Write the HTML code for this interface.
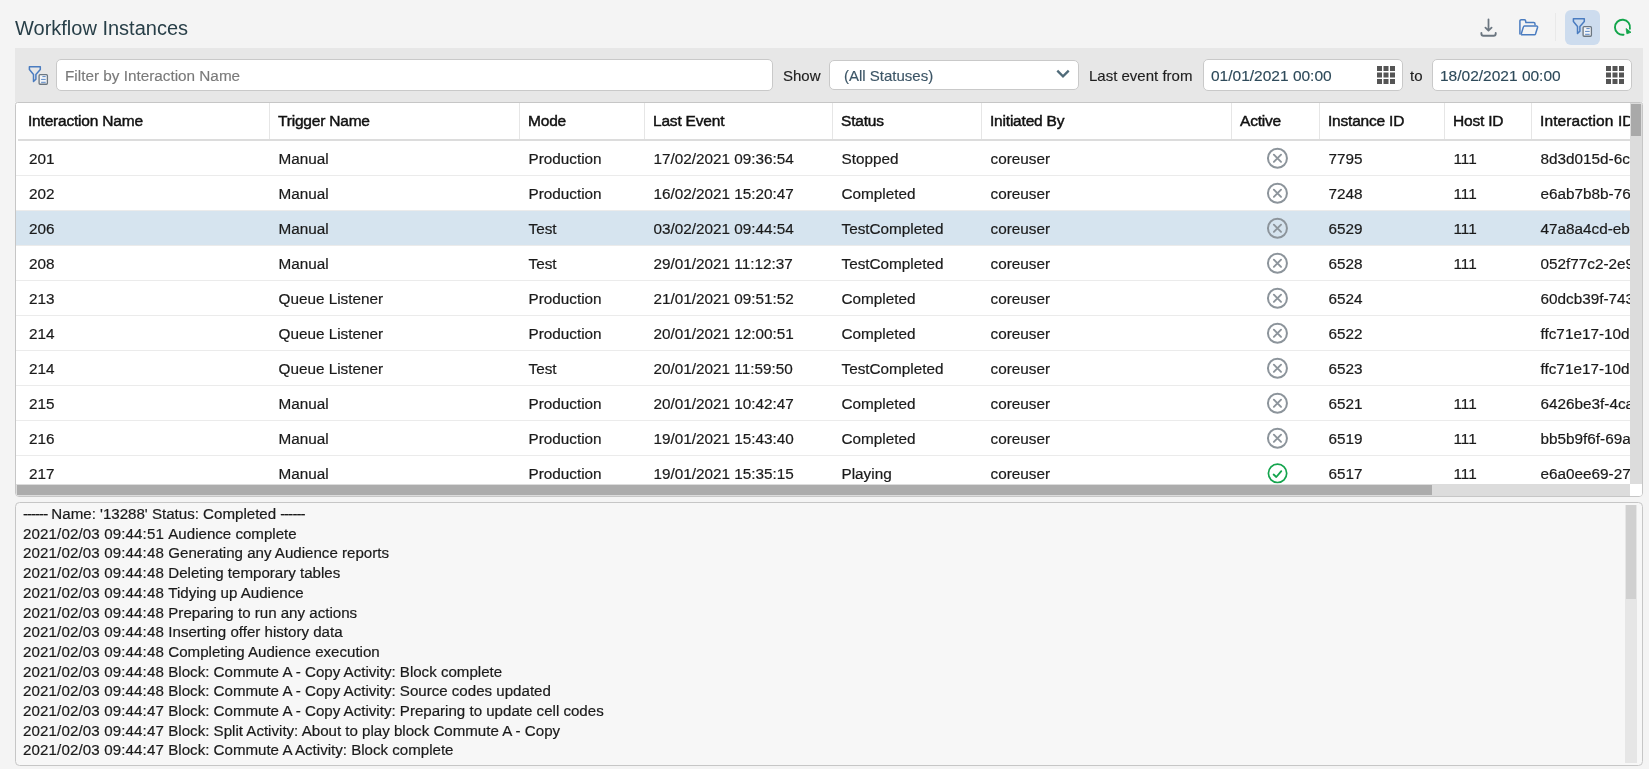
<!DOCTYPE html>
<html><head><meta charset="utf-8">
<style>
*{box-sizing:border-box;margin:0;padding:0}
html,body{-webkit-font-smoothing:antialiased;width:1649px;height:769px;overflow:hidden;background:#f4f4f4;font-family:"Liberation Sans",sans-serif;color:#222;font-size:15px}
.abs{position:absolute}
#title{position:absolute;left:15px;top:15.5px;font-size:20px;color:#283f48;letter-spacing:0px;line-height:24px;white-space:nowrap}
#toolbar{position:absolute;left:15px;top:48px;width:1628px;height:54px;background:#e7e7e7}
.inp{position:absolute;background:#fff;border:1px solid #c9c9c9;border-radius:5px}
.lbl{position:absolute;top:66px;line-height:20px;color:#1e1e1e;white-space:nowrap;-webkit-text-stroke:0.15px currentColor}
#table{position:absolute;left:15px;top:102px;width:1628px;height:395px;background:#fff;border:1px solid #c6c6c6;border-radius:2.5px 2.5px 4px 4px;overflow:hidden}
#hdr{position:absolute;left:0;top:0;width:1626px;height:38px}
#hdrline{position:absolute;left:2px;top:36px;width:1624px;height:2px;background:#dcdcdc}
.hc{position:absolute;top:0;height:36px;line-height:36px;padding-left:9px;white-space:nowrap;color:#111;font-size:15.5px;letter-spacing:-0.2px;-webkit-text-stroke:0.45px #111}
.hc.first{padding-left:12px}
.vd{position:absolute;top:0;width:1px;height:37px;background:#e6e6e6}
.row{position:absolute;left:0;width:1614px;height:35px;border-bottom:1px solid #ebebeb;background:#fff}
.row.sel{background:#d6e4ef}
.c{position:absolute;top:0;height:34px;line-height:35px;padding-left:9px;white-space:nowrap;overflow:hidden;color:#1a1a1a;font-size:15.3px;-webkit-text-stroke:0.2px #1a1a1a;padding-left:9.5px}
.c.first{padding-left:13px}
.ic{position:absolute;top:6px;width:22px;height:22px}
#vs{position:absolute;left:1614px;top:0;width:12px;height:381px;background:#dcdcdc}
#vthumb{position:absolute;left:1615px;top:1px;width:10px;height:32px;background:#a9a9a9}
#hs{position:absolute;left:0;top:381px;width:1614px;height:12px;background:#dcdcdc}
#hthumb{position:absolute;left:1px;top:382px;width:1415px;height:10px;background:#acacac}
#corner{position:absolute;left:1614px;top:381px;width:12px;height:12px;background:#fff}
#log{position:absolute;left:15px;top:502px;width:1628px;height:264px;background:#f7f7f7;border:1px solid #c6c6c6;border-radius:4.5px;overflow:hidden}
.ts{letter-spacing:0.13px}
#logtxt{position:absolute;left:7px;top:1px;font-size:15.1px;line-height:19.7px;white-space:nowrap;color:#1a1a1a;-webkit-text-stroke:0.2px #1a1a1a}
#lvs{position:absolute;left:1609px;top:2px;width:12px;height:258px;background:#e6e6e6}
#lthumb{position:absolute;left:1610px;top:2px;width:10px;height:94px;background:#d0d0d0}
#root{position:absolute;left:0;top:0;width:1649px;height:769px;will-change:transform}
</style></head><body><div id="root">
<div id="title">Workflow Instances</div>

<!-- top right icons -->
<svg class="abs" style="left:1478px;top:16px" width="21" height="22" viewBox="0 0 21 22">
  <path d="M10.5 3.3V14.6M7.4 11.6L10.5 14.7L13.6 11.6" stroke="#6b7680" stroke-width="1.75" fill="none" stroke-linecap="round" stroke-linejoin="round"/>
  <path d="M3.4 16.9V17.7a2 2 0 0 0 2 2H15.7a2 2 0 0 0 2-2V16.9" stroke="#6b7680" stroke-width="1.9" fill="none" stroke-linecap="round"/>
</svg>
<svg class="abs" style="left:1517px;top:17px" width="23" height="21" viewBox="0 0 23 21">
  <path d="M2.9 17.5V4a1.3 1.3 0 0 1 1.3-1.3H7.4a1.2 1.2 0 0 1 1.1 0.8L8.9 5.6H16.7a1.3 1.3 0 0 1 1.3 1.3V8.2" stroke="#4a7cc0" stroke-width="1.5" fill="none" stroke-linejoin="round"/>
  <path d="M4 17.8L6.4 9.9a1.2 1.2 0 0 1 1.1-0.9H19.6a1 1 0 0 1 1 1.2L18.5 17a1.2 1.2 0 0 1-1.2 0.8H4" stroke="#4a7cc0" stroke-width="1.5" fill="none" stroke-linejoin="round"/>
</svg>
<div class="abs" style="left:1555px;top:13px;width:1px;height:28px;background:#e9e9e9"></div>
<div class="abs" style="left:1565px;top:10px;width:35px;height:35px;background:#cddcee;border-radius:6px"></div>
<svg class="abs" style="left:1570px;top:16px" width="25" height="23" viewBox="0 0 25 23">
  <path d="M3.4 2.7H14.3V5.6L9.9 10.5V15.2L7.5 17.4V10.5L3.4 5.6Z" stroke="#4a7cc0" stroke-width="1.5" fill="none" stroke-linejoin="round"/>
  <rect x="13.1" y="10.65" width="8.3" height="9.6" rx="1" fill="#f2f5f9" stroke="#6b7680" stroke-width="1.3"/>
  <path d="M16.4 12.6H19.7M15.1 15.4H19.7M15.1 18.3H19.7" stroke="#4a7cc0" stroke-width="0.9"/>
</svg>
<svg class="abs" style="left:1611px;top:16px" width="23" height="23" viewBox="0 0 23 23">
  <path d="M12.55 18.73A7.55 7.55 0 1 1 18.89 12.82" stroke="#12a54a" stroke-width="1.9" fill="none" stroke-linecap="round"/>
  <path d="M15.1 12.5L20 16.3L15.9 17.8Z" fill="#12a54a" stroke="#12a54a" stroke-width="0.8" stroke-linejoin="round"/>
</svg>

<div id="toolbar"></div>
<svg class="abs" style="left:26px;top:64px" width="25" height="23" viewBox="0 0 25 23">
  <path d="M3.4 2.7H14.3V5.6L9.9 10.5V15.2L7.5 17.4V10.5L3.4 5.6Z" stroke="#4a7cc0" stroke-width="1.5" fill="none" stroke-linejoin="round"/>
  <rect x="13.1" y="10.65" width="8.3" height="9.6" rx="1" fill="#f2f5f9" stroke="#6b7680" stroke-width="1.3"/>
  <path d="M16.4 12.6H19.7M15.1 15.4H19.7M15.1 18.3H19.7" stroke="#4a7cc0" stroke-width="0.9"/>
</svg>
<div class="inp" style="left:56px;top:59px;width:717px;height:32px"></div>
<div class="lbl" style="left:65px;color:#7a7a7a;font-size:15.3px">Filter by Interaction Name</div>
<div class="lbl" style="left:783px">Show</div>
<div class="inp" style="left:829px;top:60px;width:250px;height:30px"></div>
<div class="lbl" style="left:844px;color:#3c5566">(All Statuses)</div>
<svg class="abs" style="left:1055px;top:67px" width="16" height="12" viewBox="0 0 16 12"><path d="M2.3 3.6L8 9.3L13.7 3.6" stroke="#506b79" stroke-width="2.3" fill="none"/></svg>
<div class="lbl" style="left:1089px">Last event from</div>
<div class="inp" style="left:1203px;top:59px;width:200px;height:32px"></div>
<div class="lbl" style="left:1211px;color:#2e4a5a;font-size:15.5px">01/01/2021 00:00</div>
<svg class="abs" style="left:1377px;top:66px" width="18" height="18" viewBox="0 0 18 18"><path d="M0 0h5v5h-5zM6.5 0h5v5h-5zM13 0h5v5h-5zM0 6.5h5v5h-5zM6.5 6.5h5v5h-5zM13 6.5h5v5h-5zM0 13h5v5h-5zM6.5 13h5v5h-5zM13 13h5v5h-5z" fill="#555"/></svg>
<div class="lbl" style="left:1410px">to</div>
<div class="inp" style="left:1432px;top:59px;width:200px;height:32px"></div>
<div class="lbl" style="left:1440px;color:#2e4a5a;font-size:15.5px">18/02/2021 00:00</div>
<svg class="abs" style="left:1606px;top:66px" width="18" height="18" viewBox="0 0 18 18"><path d="M0 0h5v5h-5zM6.5 0h5v5h-5zM13 0h5v5h-5zM0 6.5h5v5h-5zM6.5 6.5h5v5h-5zM13 6.5h5v5h-5zM0 13h5v5h-5zM6.5 13h5v5h-5zM13 13h5v5h-5z" fill="#555"/></svg>

<div id="table">
  <div id="hdr"><div class="hc first" style="left:0px;width:253px">Interaction Name</div><div class="vd" style="left:253px"></div><div class="hc" style="left:253px;width:250px">Trigger Name</div><div class="vd" style="left:503px"></div><div class="hc" style="left:503px;width:125px">Mode</div><div class="vd" style="left:628px"></div><div class="hc" style="left:628px;width:188px">Last Event</div><div class="vd" style="left:816px"></div><div class="hc" style="left:816px;width:149px">Status</div><div class="vd" style="left:965px"></div><div class="hc" style="left:965px;width:250px">Initiated By</div><div class="vd" style="left:1215px"></div><div class="hc" style="left:1215px;width:88px">Active</div><div class="vd" style="left:1303px"></div><div class="hc" style="left:1303px;width:125px">Instance ID</div><div class="vd" style="left:1428px"></div><div class="hc" style="left:1428px;width:87px">Host ID</div><div class="vd" style="left:1515px"></div><div class="hc" style="left:1515px;width:269px;letter-spacing:0.1px">Interaction ID</div><div id="hdrline"></div></div>
  <div class="row" style="top:38px"><div class="c first" style="left:0px;width:253px">201</div><div class="c" style="left:253px;width:250px">Manual</div><div class="c" style="left:503px;width:125px">Production</div><div class="c" style="left:628px;width:188px">17/02/2021 09:36:54</div><div class="c" style="left:816px;width:149px">Stopped</div><div class="c" style="left:965px;width:250px">coreuser</div><div class="ic" style="left:1250px"><svg width="22" height="22" viewBox="0 0 22 22"><circle cx="11.45" cy="11.25" r="9.5" fill="none" stroke="#8c949b" stroke-width="2"/><path d="M7.85 7.65L15.05 14.85M15.05 7.65L7.85 14.85" stroke="#8c949b" stroke-width="1.9" stroke-linecap="round" fill="none"/></svg></div><div class="c" style="left:1303px;width:125px">7795</div><div class="c" style="left:1428px;width:87px">111</div><div class="c" style="left:1515px;width:269px">8d3d015d-6c1a-4e2b</div></div><div class="row" style="top:73px"><div class="c first" style="left:0px;width:253px">202</div><div class="c" style="left:253px;width:250px">Manual</div><div class="c" style="left:503px;width:125px">Production</div><div class="c" style="left:628px;width:188px">16/02/2021 15:20:47</div><div class="c" style="left:816px;width:149px">Completed</div><div class="c" style="left:965px;width:250px">coreuser</div><div class="ic" style="left:1250px"><svg width="22" height="22" viewBox="0 0 22 22"><circle cx="11.45" cy="11.25" r="9.5" fill="none" stroke="#8c949b" stroke-width="2"/><path d="M7.85 7.65L15.05 14.85M15.05 7.65L7.85 14.85" stroke="#8c949b" stroke-width="1.9" stroke-linecap="round" fill="none"/></svg></div><div class="c" style="left:1303px;width:125px">7248</div><div class="c" style="left:1428px;width:87px">111</div><div class="c" style="left:1515px;width:269px">e6ab7b8b-76aa-4e2b</div></div><div class="row sel" style="top:108px"><div class="c first" style="left:0px;width:253px">206</div><div class="c" style="left:253px;width:250px">Manual</div><div class="c" style="left:503px;width:125px">Test</div><div class="c" style="left:628px;width:188px">03/02/2021 09:44:54</div><div class="c" style="left:816px;width:149px">TestCompleted</div><div class="c" style="left:965px;width:250px">coreuser</div><div class="ic" style="left:1250px"><svg width="22" height="22" viewBox="0 0 22 22"><circle cx="11.45" cy="11.25" r="9.5" fill="none" stroke="#8c949b" stroke-width="2"/><path d="M7.85 7.65L15.05 14.85M15.05 7.65L7.85 14.85" stroke="#8c949b" stroke-width="1.9" stroke-linecap="round" fill="none"/></svg></div><div class="c" style="left:1303px;width:125px">6529</div><div class="c" style="left:1428px;width:87px">111</div><div class="c" style="left:1515px;width:269px">47a8a4cd-ebcc-4e2b</div></div><div class="row" style="top:143px"><div class="c first" style="left:0px;width:253px">208</div><div class="c" style="left:253px;width:250px">Manual</div><div class="c" style="left:503px;width:125px">Test</div><div class="c" style="left:628px;width:188px">29/01/2021 11:12:37</div><div class="c" style="left:816px;width:149px">TestCompleted</div><div class="c" style="left:965px;width:250px">coreuser</div><div class="ic" style="left:1250px"><svg width="22" height="22" viewBox="0 0 22 22"><circle cx="11.45" cy="11.25" r="9.5" fill="none" stroke="#8c949b" stroke-width="2"/><path d="M7.85 7.65L15.05 14.85M15.05 7.65L7.85 14.85" stroke="#8c949b" stroke-width="1.9" stroke-linecap="round" fill="none"/></svg></div><div class="c" style="left:1303px;width:125px">6528</div><div class="c" style="left:1428px;width:87px">111</div><div class="c" style="left:1515px;width:269px">052f77c2-2e9a-4e2b</div></div><div class="row" style="top:178px"><div class="c first" style="left:0px;width:253px">213</div><div class="c" style="left:253px;width:250px">Queue Listener</div><div class="c" style="left:503px;width:125px">Production</div><div class="c" style="left:628px;width:188px">21/01/2021 09:51:52</div><div class="c" style="left:816px;width:149px">Completed</div><div class="c" style="left:965px;width:250px">coreuser</div><div class="ic" style="left:1250px"><svg width="22" height="22" viewBox="0 0 22 22"><circle cx="11.45" cy="11.25" r="9.5" fill="none" stroke="#8c949b" stroke-width="2"/><path d="M7.85 7.65L15.05 14.85M15.05 7.65L7.85 14.85" stroke="#8c949b" stroke-width="1.9" stroke-linecap="round" fill="none"/></svg></div><div class="c" style="left:1303px;width:125px">6524</div><div class="c" style="left:1428px;width:87px"></div><div class="c" style="left:1515px;width:269px">60dcb39f-743a-4e2b</div></div><div class="row" style="top:213px"><div class="c first" style="left:0px;width:253px">214</div><div class="c" style="left:253px;width:250px">Queue Listener</div><div class="c" style="left:503px;width:125px">Production</div><div class="c" style="left:628px;width:188px">20/01/2021 12:00:51</div><div class="c" style="left:816px;width:149px">Completed</div><div class="c" style="left:965px;width:250px">coreuser</div><div class="ic" style="left:1250px"><svg width="22" height="22" viewBox="0 0 22 22"><circle cx="11.45" cy="11.25" r="9.5" fill="none" stroke="#8c949b" stroke-width="2"/><path d="M7.85 7.65L15.05 14.85M15.05 7.65L7.85 14.85" stroke="#8c949b" stroke-width="1.9" stroke-linecap="round" fill="none"/></svg></div><div class="c" style="left:1303px;width:125px">6522</div><div class="c" style="left:1428px;width:87px"></div><div class="c" style="left:1515px;width:269px">ffc71e17-10da-4e2b</div></div><div class="row" style="top:248px"><div class="c first" style="left:0px;width:253px">214</div><div class="c" style="left:253px;width:250px">Queue Listener</div><div class="c" style="left:503px;width:125px">Test</div><div class="c" style="left:628px;width:188px">20/01/2021 11:59:50</div><div class="c" style="left:816px;width:149px">TestCompleted</div><div class="c" style="left:965px;width:250px">coreuser</div><div class="ic" style="left:1250px"><svg width="22" height="22" viewBox="0 0 22 22"><circle cx="11.45" cy="11.25" r="9.5" fill="none" stroke="#8c949b" stroke-width="2"/><path d="M7.85 7.65L15.05 14.85M15.05 7.65L7.85 14.85" stroke="#8c949b" stroke-width="1.9" stroke-linecap="round" fill="none"/></svg></div><div class="c" style="left:1303px;width:125px">6523</div><div class="c" style="left:1428px;width:87px"></div><div class="c" style="left:1515px;width:269px">ffc71e17-10da-4e2b</div></div><div class="row" style="top:283px"><div class="c first" style="left:0px;width:253px">215</div><div class="c" style="left:253px;width:250px">Manual</div><div class="c" style="left:503px;width:125px">Production</div><div class="c" style="left:628px;width:188px">20/01/2021 10:42:47</div><div class="c" style="left:816px;width:149px">Completed</div><div class="c" style="left:965px;width:250px">coreuser</div><div class="ic" style="left:1250px"><svg width="22" height="22" viewBox="0 0 22 22"><circle cx="11.45" cy="11.25" r="9.5" fill="none" stroke="#8c949b" stroke-width="2"/><path d="M7.85 7.65L15.05 14.85M15.05 7.65L7.85 14.85" stroke="#8c949b" stroke-width="1.9" stroke-linecap="round" fill="none"/></svg></div><div class="c" style="left:1303px;width:125px">6521</div><div class="c" style="left:1428px;width:87px">111</div><div class="c" style="left:1515px;width:269px">6426be3f-4caa-4e2b</div></div><div class="row" style="top:318px"><div class="c first" style="left:0px;width:253px">216</div><div class="c" style="left:253px;width:250px">Manual</div><div class="c" style="left:503px;width:125px">Production</div><div class="c" style="left:628px;width:188px">19/01/2021 15:43:40</div><div class="c" style="left:816px;width:149px">Completed</div><div class="c" style="left:965px;width:250px">coreuser</div><div class="ic" style="left:1250px"><svg width="22" height="22" viewBox="0 0 22 22"><circle cx="11.45" cy="11.25" r="9.5" fill="none" stroke="#8c949b" stroke-width="2"/><path d="M7.85 7.65L15.05 14.85M15.05 7.65L7.85 14.85" stroke="#8c949b" stroke-width="1.9" stroke-linecap="round" fill="none"/></svg></div><div class="c" style="left:1303px;width:125px">6519</div><div class="c" style="left:1428px;width:87px">111</div><div class="c" style="left:1515px;width:269px">bb5b9f6f-69aa-4e2b</div></div><div class="row" style="top:353px"><div class="c first" style="left:0px;width:253px">217</div><div class="c" style="left:253px;width:250px">Manual</div><div class="c" style="left:503px;width:125px">Production</div><div class="c" style="left:628px;width:188px">19/01/2021 15:35:15</div><div class="c" style="left:816px;width:149px">Playing</div><div class="c" style="left:965px;width:250px">coreuser</div><div class="ic" style="left:1250px"><svg width="22" height="22" viewBox="0 0 22 22"><circle cx="11.55" cy="11.35" r="9.15" fill="none" stroke="#14a44d" stroke-width="1.7"/><path d="M7.6 12.5L10.3 15L15.3 9.1" stroke="#14a44d" stroke-width="1.8" stroke-linecap="round" stroke-linejoin="round" fill="none"/></svg></div><div class="c" style="left:1303px;width:125px">6517</div><div class="c" style="left:1428px;width:87px">111</div><div class="c" style="left:1515px;width:269px">e6a0ee69-27fa-4e2b</div></div>
  <div id="vs"></div><div id="vthumb"></div>
  <div id="hs"></div><div id="hthumb"></div><div id="corner"></div>
</div>

<div id="log">
  <div id="logtxt"><div class="ll"><span style="letter-spacing:-1px">------</span> Name: &#39;13288&#39; Status: Completed <span style="letter-spacing:-1px">------</span></div><div class="ll"><span class="ts">2021/02/03 09:44:51 </span>Audience complete</div><div class="ll"><span class="ts">2021/02/03 09:44:48 </span>Generating any Audience reports</div><div class="ll"><span class="ts">2021/02/03 09:44:48 </span>Deleting temporary tables</div><div class="ll"><span class="ts">2021/02/03 09:44:48 </span>Tidying up Audience</div><div class="ll"><span class="ts">2021/02/03 09:44:48 </span>Preparing to run any actions</div><div class="ll"><span class="ts">2021/02/03 09:44:48 </span>Inserting offer history data</div><div class="ll"><span class="ts">2021/02/03 09:44:48 </span>Completing Audience execution</div><div class="ll"><span class="ts">2021/02/03 09:44:48 </span>Block: Commute A - Copy Activity: Block complete</div><div class="ll"><span class="ts">2021/02/03 09:44:48 </span>Block: Commute A - Copy Activity: Source codes updated</div><div class="ll"><span class="ts">2021/02/03 09:44:47 </span>Block: Commute A - Copy Activity: Preparing to update cell codes</div><div class="ll"><span class="ts">2021/02/03 09:44:47 </span>Block: Split Activity: About to play block Commute A - Copy</div><div class="ll"><span class="ts">2021/02/03 09:44:47 </span>Block: Commute A Activity: Block complete</div></div>
  <div id="lvs"></div><div id="lthumb"></div>
</div>
</div></body></html>
